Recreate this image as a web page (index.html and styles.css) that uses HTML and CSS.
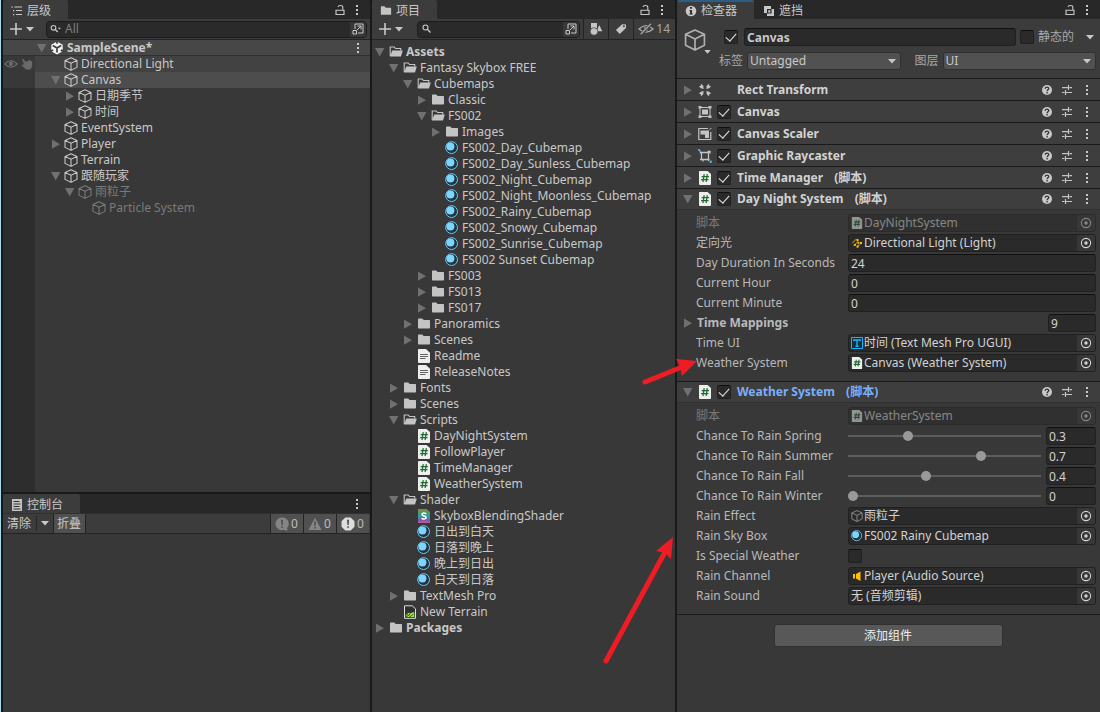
FILE: index.html
```html
<!DOCTYPE html>
<html lang="zh-CN">
<head>
<meta charset="utf-8">
<meta name="viewport" content="width=device-width, initial-scale=1">
<title>SampleScene</title>
<link rel="stylesheet" href="styles.css">
</head>
<body>
<svg class="sprite" aria-hidden="true">
  <symbol id="down" viewBox="0 0 14 14"><path d="M2 3h9.400L6.700 11.400z" fill="currentColor"/></symbol>
  <symbol id="right" viewBox="0 0 14 14"><path d="M3 2.600v9.200L11 7.200z" fill="currentColor"/></symbol>
  <symbol id="caret" viewBox="0 0 8 5"><path d="M0 0h8L4 4.600z" fill="currentColor"/></symbol>
  <symbol id="plus" viewBox="0 0 12 12"><path d="M6 0v12M0 6h12" stroke="currentColor" stroke-width="1.600"/></symbol>
  <symbol id="dots" viewBox="0 0 4 12"><path d="M1 1h2v2H1zM1 5h2v2H1zM1 9h2v2H1z" fill="currentColor"/></symbol>
  <symbol id="lock" viewBox="0 0 12 12"><path d="M2 6.300h8v4.200H2zM8.800 6V3.200C8.800.9 4.200.9 4 3" fill="none" stroke="currentColor" stroke-width="1.100"/></symbol>
  <symbol id="cube" viewBox="0 0 14 14"><path d="M7 .7l6 2.700v7L7 13.400l-6-3v-7zM1 3.400l6 2.900 6-2.900M7 6.300v7" fill="none" stroke="currentColor" stroke-width="1.050" stroke-linejoin="round"/></symbol>
  <symbol id="unity" viewBox="0 0 14 14"><path d="M7 .4l5.700 3.300v6.600L7 13.600 1.300 10.300V3.700z" fill="#f2f2f2"/><path d="M7 7v4.600M7 7L2.800 4.600M7 7l4.200-2.400M7 0v2.800M0 10.500l3.200-1.600M14 10.500l-3.200-1.600" stroke="#3c3c3c" stroke-width="1.700"/></symbol>
  <symbol id="folder" viewBox="0 0 14 14"><path d="M1 2.200q0-.7.7-.7h3.500l1.500 1.600h5.600q.7 0 .7.7v7q0 .7-.7.7H1.700q-.7 0-.7-.7z" fill="#c4c4c4"/></symbol>
  <symbol id="open" viewBox="0 0 14 14"><path d="M1.200 11V2h4l1.300 1.500h5.200v2" fill="none" stroke="#c4c4c4" stroke-width="1.100"/><path d="M3.300 5.500h10.500L12 11.500H.9z" fill="#c4c4c4"/></symbol>
  <symbol id="ball" viewBox="0 0 14 14"><circle cx="6.600" cy="6.600" r="5.900" fill="#24343e" stroke="#76c5ec" stroke-width="1"/><circle cx="5.400" cy="5.400" r="4" fill="#7bd5ff"/></symbol>
  <symbol id="doc" viewBox="0 0 14 14"><path d="M1.500 0H9l4 3.700V13q0 1-1 1H2q-1 0-1-1V.5q0-.5.5-.5z" fill="#eee"/><path d="M3 5.500h8M3 7.500h8M3 9.500h5.500" stroke="#555" stroke-width=".9"/></symbol>
  <symbol id="script" viewBox="0 0 14 14"><path d="M1.500 0H9.500l3.500 3V13q0 1-1 1H2q-1 0-1-1V.5q0-.5.5-.5z" fill="#eee"/><path d="M6.200 3.200L5 11M9.300 3.200L8.100 11M3.600 5.700h7.400M3.100 8.600h7.400" stroke="#1d6b2d" stroke-width="1.250" fill="none"/></symbol>
  <symbol id="shader" viewBox="0 0 14 14"><defs><linearGradient id="rainbow" x2="0" y2="1"><stop stop-color="#9a7d3a"/><stop offset=".25" stop-color="#4d9a62"/><stop offset=".55" stop-color="#3a95a8"/><stop offset=".8" stop-color="#7a5ca8"/><stop offset="1" stop-color="#d0559a"/></linearGradient></defs><path d="M1 0h8.500l3.500 3v11H1z" fill="url(#rainbow)"/><path d="M9.300 5Q7.500 3.700 5.800 4.300C4.500 5 4.900 6.500 7 7s2.700 1.800 1.500 2.700q-1.800.9-3.900-.4" fill="none" stroke="#fff" stroke-width="1.500"/></symbol>
  <symbol id="terrain" viewBox="0 0 14 14"><path d="M1.500.8h7.700l3.300 3v9.500h-11z" fill="#303030" stroke="#ddd" stroke-width="1"/><path d="M2.800 9.500l3-1.800 2 .3 3.500-1v5H2.800z" fill="#9eea38"/><path d="M3 12l4-2.500M6 12.500l4.500-3.500M3 10l2-.5M8 7l-2 3" stroke="#303030" stroke-width=".8"/></symbol>
  <symbol id="list" viewBox="0 0 12 12"><path d="M3.500 2h7.500M5 5.500h6M5 9.500h6" stroke="currentColor" stroke-width="1.100"/><path d="M.5 1.500h1.300v1.300H.5zM2 5h1.300v1.200H2zM2 9h1.300v1.200H2z" fill="currentColor"/></symbol>
  <symbol id="console" viewBox="0 0 12 12"><path d="M1 0h10v12H1z" fill="#c4c4c4"/><path d="M2.500 2.500h6M2.500 5h7M2.500 7.500h6M2.500 10h7" stroke="#333" stroke-width="1"/></symbol>
  <symbol id="info" viewBox="0 0 12 12"><circle cx="6" cy="6" r="5.300" fill="#c8c8c8"/><path d="M5 2h2v1.700H5zM4.500 5H7v3.500h.8v1H4.300v-1H5V6h-.5z" fill="#333"/></symbol>
  <symbol id="occlude" viewBox="0 0 12 12"><path d="M1 1h7v3H4v4H1z" fill="#c8c8c8"/><path d="M4 4h7v7H4z" fill="#c8c8c8"/><path d="M4.600 4.600h3.400v3.400H4.600z" fill="none" stroke="#282828" stroke-width="1.200"/></symbol>
  <symbol id="glass" viewBox="0 0 12 12"><circle cx="4.500" cy="4.500" r="2.500" fill="none" stroke="currentColor" stroke-width="1.100"/><path d="M6.300 6.300L9.500 9.500" stroke="currentColor" stroke-width="1.300"/></symbol>
  <symbol id="glassdown" viewBox="0 0 12 12"><circle cx="3.500" cy="4.800" r="2.300" fill="none" stroke="currentColor" stroke-width="1.100"/><path d="M5.300 6.500L7.800 9" stroke="currentColor" stroke-width="1.300"/><path d="M7.800 4.700H11L9.400 6.500z" fill="currentColor"/></symbol>
  <symbol id="popout" viewBox="0 0 12 12"><path d="M3 6V1h8v9H6M1 7.500h3.500V11H1zM5 7l4-4M5.500 3H9v3.500" fill="none" stroke="currentColor" stroke-width="1"/></symbol>
  <symbol id="eye" viewBox="0 0 14 12"><path d="M.8 6Q7-.8 13.200 6 7 12.300.8 6z" fill="none" stroke="currentColor" stroke-width="1.300"/><circle cx="7" cy="5.800" r="2.300" fill="currentColor"/></symbol>
  <symbol id="hand" viewBox="0 0 12 12"><path d="M.8.8L2 .7l2.600 3L7.200 3l1.100-1.500L9.800 3l1.400.3V8l-1.500 3.500H5L.7 7.600l.2-1.200 2.200.2z" fill="currentColor"/></symbol>
  <symbol id="shapes" viewBox="0 0 14 14"><path d="M2 1h6v5H2zM10.300 3L13.300 9.300H7.500z" fill="#c4c4c4"/><circle cx="5" cy="9.500" r="3.800" fill="#c4c4c4" stroke="#3c3c3c" stroke-width=".7"/></symbol>
  <symbol id="tag" viewBox="0 0 12 12"><path d="M7.200 1.200l3.800.2v3.700L4.700 11 .9 7z" fill="#c4c4c4"/><circle cx="8.900" cy="3.300" r="1" fill="#3c3c3c"/></symbol>
  <symbol id="hidden" viewBox="0 0 16 12"><path d="M1 6Q8-.8 15 6 8 12.300 1 6z" fill="none" stroke="currentColor" stroke-width="1.300"/><circle cx="8" cy="6" r="2.200" fill="currentColor"/><path d="M3 11.500L13.500.5" stroke="#3c3c3c" stroke-width="3"/><path d="M2.700 11.300L13 .7" stroke="currentColor" stroke-width="1.300"/></symbol>
  <symbol id="rect" viewBox="0 0 14 14"><path d="M3 .8l2.300 2L5.600 6 2.800 5.300.8 3.200l1.900-.3zM11 .8l-2.300 2L8.400 6l2.800-.7 2-2.100-1.900-.3zM3 13.200l2.300-2L5.600 8l-2.800.7-2 2.100 1.900.3zM11 13.200l-2.300-2L8.400 8l2.800.7 2 2.100-1.900.3z" fill="#c4c4c4"/></symbol>
  <symbol id="canvas" viewBox="0 0 14 14"><path d="M2 2.500h10v9H2z" fill="none" stroke="#c4c4c4"/><path d="M4 4.500h6v5H4zM.5 1h3v2.500h-3zM10.500 1h3v2.500h-3zM.5 10.500h3V13h-3zM10.500 10.500h3V13h-3z" fill="#c4c4c4"/></symbol>
  <symbol id="scaler" viewBox="0 0 14 14"><path d="M10 1.500H.8v11h12V5" fill="none" stroke="#c4c4c4" stroke-width="1.200"/><path d="M2.500 3.500H11V11H7V7.500H2.500z" fill="#c4c4c4"/><path d="M11.500 2.800L13.300 1" fill="none" stroke="#c4c4c4"/></symbol>
  <symbol id="raycast" viewBox="0 0 14 14"><path d="M3.500 3.500h7v7h-7zM2.500 2.500v2M2 3.500h2M9.500 2.500h2.500v2M2 10.500h3v2M9.500 10.500h2M10.500 9v3" fill="none" stroke="#c4c4c4" stroke-width="1.300"/><path d="M0 0l2.500 2.500" stroke="#5ab8ee" stroke-width="1.600"/><circle cx="12.700" cy="12.700" r="1.200" fill="#5ab8ee"/></symbol>
  <symbol id="help" viewBox="0 0 12 12"><circle cx="6" cy="6" r="5" fill="#c8c8c8"/><path d="M4.200 4.700C4.200 2.600 7.800 2.700 7.700 4.600 7.600 5.900 6.100 5.700 6.100 7.200M6.100 8.100v1.400" fill="none" stroke="#333" stroke-width="1.300"/></symbol>
  <symbol id="presets" viewBox="0 0 12 12"><path d="M1 3.700h6M8.500 3.700H11M7.500 1v5M1 8.500h2.500M5 8.500h6M4.500 6v5" stroke="#c4c4c4" stroke-width="1.200"/></symbol>
  <symbol id="target" viewBox="0 0 12 12"><circle cx="6" cy="6" r="4.600" fill="none" stroke="currentColor" stroke-width="1.100"/><circle cx="6" cy="6" r="1.700" fill="currentColor"/></symbol>
  <symbol id="light" viewBox="0 0 12 12"><path d="M1.300 6L5.500 1.800M3.500 8L7.500 4M5.500 10.500l4-4" stroke="#8d7440" stroke-width="1.200"/><path d="M5.500 2h2v2h-2zM9 5h2v2H9zM2.800 7h2v2h-2zM5.700 8.500h2v2h-2zM6.500 5h1.700v1.700H6.500z" fill="#ffc107"/></symbol>
  <symbol id="tmp" viewBox="0 0 12 12"><path d="M.5.5h11v11H.5z" fill="#10303f" stroke="#22b0f5" stroke-width="1"/><path d="M2.800 4.300V3h6.400v1.300M6 3v6M4.500 9.300h3" fill="none" stroke="#22b0f5" stroke-width="1.400"/></symbol>
  <symbol id="audio" viewBox="0 0 12 12"><path d="M2 4h2v4.500H2z" fill="#ffc107"/><path d="M5 4L9.500 1.500v9.500L5 8.500z" fill="#ffc107"/></symbol>
  <symbol id="bubble" viewBox="0 0 14 14"><path d="M7 .5a6.300 6.300 0 1 0 2 12.200L12.500 14l-.4-3A6.300 6.300 0 0 0 7 .5z" fill="#858585"/><path d="M6.200 2.800h1.700L7.600 8H6.500zM6.300 9.300h1.500v1.500H6.300z" fill="#444"/></symbol>
  <symbol id="warn" viewBox="0 0 14 14"><path d="M7 .8L13.500 13H.5z" fill="#858585"/><path d="M6.300 4.500h1.500L7.500 9h-1zM6.300 10h1.500v1.500H6.300z" fill="#444"/></symbol>
  <symbol id="error" viewBox="0 0 14 14"><path d="M4.300.5h5.400l3.800 3.800v5.400l-3.800 3.800H4.300L.5 9.700V4.300z" fill="#ddd"/><path d="M6.200 2.800h1.700L7.600 8H6.500zM6.300 9.300h1.500v1.500H6.300z" fill="#333"/></symbol>
</svg>

<main class="editor">
  <div class="column">
    <section class="panel hierarchy">
      <header class="tabs">
        <button class="tab active"><svg class="i12"><use href="#list"/></svg>层级</button>
        <span class="tools"><button aria-label="锁定"><svg class="i12"><use href="#lock"/></svg></button><button aria-label="菜单"><svg class="idots"><use href="#dots"/></svg></button></span>
      </header>
      <div class="toolbar">
        <button class="add" aria-label="创建"><svg class="i12"><use href="#plus"/></svg><svg class="icaret"><use href="#caret"/></svg></button>
        <label class="search"><svg class="i12"><use href="#glassdown"/></svg><input type="text" placeholder="All" aria-label="搜索层级"><button aria-label="打开搜索"><svg class="i12"><use href="#popout"/></svg></button></label>
      </div>
      <ul class="tree scene-tree">
        <li class="row scene"><span class="vis"></span><button class="fold" aria-label="折叠"><svg><use href="#down"/></svg></button><svg class="icon"><use href="#unity"/></svg><span>SampleScene*</span><button class="end" aria-label="场景菜单"><svg class="idots"><use href="#dots"/></svg></button></li>
        <li class="row d1 hover"><span class="vis"><svg class="ieye"><use href="#eye"/></svg><svg class="i12"><use href="#hand"/></svg></span><i class="fold"></i><svg class="icon"><use href="#cube"/></svg><span>Directional Light</span></li>
        <li class="row d1 selected"><span class="vis"></span><button class="fold" aria-label="折叠"><svg><use href="#down"/></svg></button><svg class="icon"><use href="#cube"/></svg><span>Canvas</span></li>
        <li class="row d2"><span class="vis"></span><button class="fold" aria-label="展开"><svg><use href="#right"/></svg></button><svg class="icon"><use href="#cube"/></svg><span>日期季节</span></li>
        <li class="row d2"><span class="vis"></span><button class="fold" aria-label="展开"><svg><use href="#right"/></svg></button><svg class="icon"><use href="#cube"/></svg><span>时间</span></li>
        <li class="row d1"><span class="vis"></span><i class="fold"></i><svg class="icon"><use href="#cube"/></svg><span>EventSystem</span></li>
        <li class="row d1"><span class="vis"></span><button class="fold" aria-label="展开"><svg><use href="#right"/></svg></button><svg class="icon"><use href="#cube"/></svg><span>Player</span></li>
        <li class="row d1"><span class="vis"></span><i class="fold"></i><svg class="icon"><use href="#cube"/></svg><span>Terrain</span></li>
        <li class="row d1"><span class="vis"></span><button class="fold" aria-label="折叠"><svg><use href="#down"/></svg></button><svg class="icon"><use href="#cube"/></svg><span>跟随玩家</span></li>
        <li class="row d2 off"><span class="vis"></span><button class="fold" aria-label="折叠"><svg><use href="#down"/></svg></button><svg class="icon"><use href="#cube"/></svg><span>雨粒子</span></li>
        <li class="row d3 off"><span class="vis"></span><i class="fold"></i><svg class="icon"><use href="#cube"/></svg><span>Particle System</span></li>
      </ul>
    </section>
    <section class="panel console">
      <header class="tabs">
        <button class="tab active"><svg class="i12"><use href="#console"/></svg>控制台</button>
        <span class="tools"><button aria-label="菜单"><svg class="idots"><use href="#dots"/></svg></button></span>
      </header>
      <div class="console-bar">
        <button class="clear">清除</button>
        <button class="clear-menu" aria-label="清除选项"><svg class="icaret"><use href="#caret"/></svg></button>
        <button class="toggle">折叠</button>
        <span class="counts">
          <button class="toggle"><svg class="icon"><use href="#bubble"/></svg>0</button>
          <button class="toggle"><svg class="icon"><use href="#warn"/></svg>0</button>
          <button class="toggle"><svg class="icon"><use href="#error"/></svg>0</button>
        </span>
      </div>
    </section>
  </div>

  <section class="panel project">
    <header class="tabs">
      <button class="tab active"><svg class="i12"><use href="#folder"/></svg>项目</button>
      <span class="tools"><button aria-label="锁定"><svg class="i12"><use href="#lock"/></svg></button><button aria-label="菜单"><svg class="idots"><use href="#dots"/></svg></button></span>
    </header>
    <div class="toolbar">
      <button class="add" aria-label="创建"><svg class="i12"><use href="#plus"/></svg><svg class="icaret"><use href="#caret"/></svg></button>
      <label class="search"><svg class="i12"><use href="#glass"/></svg><input type="text" aria-label="搜索项目"><button aria-label="打开搜索"><svg class="i12"><use href="#popout"/></svg></button></label>
      <span class="filters">
        <button aria-label="按类型搜索"><svg class="icon"><use href="#shapes"/></svg></button>
        <button aria-label="按标签搜索"><svg class="i12"><use href="#tag"/></svg></button>
        <button><svg class="ihidden"><use href="#hidden"/></svg>14</button>
      </span>
    </div>
    <ul class="tree assets">
      <li class="row strong"><button class="fold" aria-label="折叠"><svg><use href="#down"/></svg></button><svg class="icon"><use href="#open"/></svg><span>Assets</span></li>
      <li class="row d1"><button class="fold" aria-label="折叠"><svg><use href="#down"/></svg></button><svg class="icon"><use href="#open"/></svg><span>Fantasy Skybox FREE</span></li>
      <li class="row d2"><button class="fold" aria-label="折叠"><svg><use href="#down"/></svg></button><svg class="icon"><use href="#open"/></svg><span>Cubemaps</span></li>
      <li class="row d3"><button class="fold" aria-label="展开"><svg><use href="#right"/></svg></button><svg class="icon"><use href="#folder"/></svg><span>Classic</span></li>
      <li class="row d3"><button class="fold" aria-label="折叠"><svg><use href="#down"/></svg></button><svg class="icon"><use href="#open"/></svg><span>FS002</span></li>
      <li class="row d4"><button class="fold" aria-label="展开"><svg><use href="#right"/></svg></button><svg class="icon"><use href="#folder"/></svg><span>Images</span></li>
      <li class="row d4"><i class="fold"></i><svg class="icon"><use href="#ball"/></svg><span>FS002_Day_Cubemap</span></li>
      <li class="row d4"><i class="fold"></i><svg class="icon"><use href="#ball"/></svg><span>FS002_Day_Sunless_Cubemap</span></li>
      <li class="row d4"><i class="fold"></i><svg class="icon"><use href="#ball"/></svg><span>FS002_Night_Cubemap</span></li>
      <li class="row d4"><i class="fold"></i><svg class="icon"><use href="#ball"/></svg><span>FS002_Night_Moonless_Cubemap</span></li>
      <li class="row d4"><i class="fold"></i><svg class="icon"><use href="#ball"/></svg><span>FS002_Rainy_Cubemap</span></li>
      <li class="row d4"><i class="fold"></i><svg class="icon"><use href="#ball"/></svg><span>FS002_Snowy_Cubemap</span></li>
      <li class="row d4"><i class="fold"></i><svg class="icon"><use href="#ball"/></svg><span>FS002_Sunrise_Cubemap</span></li>
      <li class="row d4"><i class="fold"></i><svg class="icon"><use href="#ball"/></svg><span>FS002 Sunset Cubemap</span></li>
      <li class="row d3"><button class="fold" aria-label="展开"><svg><use href="#right"/></svg></button><svg class="icon"><use href="#folder"/></svg><span>FS003</span></li>
      <li class="row d3"><button class="fold" aria-label="展开"><svg><use href="#right"/></svg></button><svg class="icon"><use href="#folder"/></svg><span>FS013</span></li>
      <li class="row d3"><button class="fold" aria-label="展开"><svg><use href="#right"/></svg></button><svg class="icon"><use href="#folder"/></svg><span>FS017</span></li>
      <li class="row d2"><button class="fold" aria-label="展开"><svg><use href="#right"/></svg></button><svg class="icon"><use href="#folder"/></svg><span>Panoramics</span></li>
      <li class="row d2"><button class="fold" aria-label="展开"><svg><use href="#right"/></svg></button><svg class="icon"><use href="#folder"/></svg><span>Scenes</span></li>
      <li class="row d2"><i class="fold"></i><svg class="icon"><use href="#doc"/></svg><span>Readme</span></li>
      <li class="row d2"><i class="fold"></i><svg class="icon"><use href="#doc"/></svg><span>ReleaseNotes</span></li>
      <li class="row d1"><button class="fold" aria-label="展开"><svg><use href="#right"/></svg></button><svg class="icon"><use href="#folder"/></svg><span>Fonts</span></li>
      <li class="row d1"><button class="fold" aria-label="展开"><svg><use href="#right"/></svg></button><svg class="icon"><use href="#folder"/></svg><span>Scenes</span></li>
      <li class="row d1"><button class="fold" aria-label="折叠"><svg><use href="#down"/></svg></button><svg class="icon"><use href="#open"/></svg><span>Scripts</span></li>
      <li class="row d2"><i class="fold"></i><svg class="icon"><use href="#script"/></svg><span>DayNightSystem</span></li>
      <li class="row d2"><i class="fold"></i><svg class="icon"><use href="#script"/></svg><span>FollowPlayer</span></li>
      <li class="row d2"><i class="fold"></i><svg class="icon"><use href="#script"/></svg><span>TimeManager</span></li>
      <li class="row d2"><i class="fold"></i><svg class="icon"><use href="#script"/></svg><span>WeatherSystem</span></li>
      <li class="row d1"><button class="fold" aria-label="折叠"><svg><use href="#down"/></svg></button><svg class="icon"><use href="#open"/></svg><span>Shader</span></li>
      <li class="row d2"><i class="fold"></i><svg class="icon"><use href="#shader"/></svg><span>SkyboxBlendingShader</span></li>
      <li class="row d2"><i class="fold"></i><svg class="icon"><use href="#ball"/></svg><span>日出到白天</span></li>
      <li class="row d2"><i class="fold"></i><svg class="icon"><use href="#ball"/></svg><span>日落到晚上</span></li>
      <li class="row d2"><i class="fold"></i><svg class="icon"><use href="#ball"/></svg><span>晚上到日出</span></li>
      <li class="row d2"><i class="fold"></i><svg class="icon"><use href="#ball"/></svg><span>白天到日落</span></li>
      <li class="row d1"><button class="fold" aria-label="展开"><svg><use href="#right"/></svg></button><svg class="icon"><use href="#folder"/></svg><span>TextMesh Pro</span></li>
      <li class="row d1"><i class="fold"></i><svg class="icon"><use href="#terrain"/></svg><span>New Terrain</span></li>
      <li class="row strong"><button class="fold" aria-label="展开"><svg><use href="#right"/></svg></button><svg class="icon"><use href="#folder"/></svg><span>Packages</span></li>
    </ul>
  </section>

  <section class="panel inspector">
    <header class="tabs">
      <button class="tab active focused"><svg class="i12"><use href="#info"/></svg>检查器</button>
      <button class="tab"><svg class="i12"><use href="#occlude"/></svg>遮挡</button>
      <span class="tools"><button aria-label="锁定"><svg class="i12"><use href="#lock"/></svg></button><button aria-label="菜单"><svg class="idots"><use href="#dots"/></svg></button></span>
    </header>
    <div class="object-head">
      <button class="object-icon" aria-label="选择图标"><svg class="big"><use href="#cube"/></svg><svg class="icaret"><use href="#caret"/></svg></button>
      <div class="object-lines">
        <div class="name-line">
          <input type="checkbox" checked aria-label="启用">
          <input class="field name" type="text" value="Canvas" aria-label="名称">
          <input type="checkbox" id="static"><label for="static">静态的</label>
          <button class="static-menu" aria-label="静态选项"><svg class="icaret"><use href="#caret"/></svg></button>
        </div>
        <div class="tag-line">
          <label for="tagsel">标签</label><span class="drop"><select id="tagsel"><option>Untagged</option></select><svg class="icaret"><use href="#caret"/></svg></span>
          <label class="layer" for="layersel">图层</label><span class="drop"><select id="layersel"><option>UI</option></select><svg class="icaret"><use href="#caret"/></svg></span>
        </div>
      </div>
    </div>

    <article class="component"><header class="comp-head"><button class="fold" aria-label="展开"><svg><use href="#right"/></svg></button><svg class="icon"><use href="#rect"/></svg><i class="nobox"></i><h2>Rect Transform</h2><button aria-label="帮助"><svg class="i12"><use href="#help"/></svg></button><button aria-label="预设"><svg class="i12"><use href="#presets"/></svg></button><button aria-label="菜单"><svg class="idots"><use href="#dots"/></svg></button></header></article>
    <article class="component"><header class="comp-head"><button class="fold" aria-label="展开"><svg><use href="#right"/></svg></button><svg class="icon"><use href="#canvas"/></svg><input type="checkbox" checked aria-label="启用 Canvas"><h2>Canvas</h2><button aria-label="帮助"><svg class="i12"><use href="#help"/></svg></button><button aria-label="预设"><svg class="i12"><use href="#presets"/></svg></button><button aria-label="菜单"><svg class="idots"><use href="#dots"/></svg></button></header></article>
    <article class="component"><header class="comp-head"><button class="fold" aria-label="展开"><svg><use href="#right"/></svg></button><svg class="icon"><use href="#scaler"/></svg><input type="checkbox" checked aria-label="启用 Canvas Scaler"><h2>Canvas Scaler</h2><button aria-label="帮助"><svg class="i12"><use href="#help"/></svg></button><button aria-label="预设"><svg class="i12"><use href="#presets"/></svg></button><button aria-label="菜单"><svg class="idots"><use href="#dots"/></svg></button></header></article>
    <article class="component"><header class="comp-head"><button class="fold" aria-label="展开"><svg><use href="#right"/></svg></button><svg class="icon"><use href="#raycast"/></svg><input type="checkbox" checked aria-label="启用 Graphic Raycaster"><h2>Graphic Raycaster</h2><button aria-label="帮助"><svg class="i12"><use href="#help"/></svg></button><button aria-label="预设"><svg class="i12"><use href="#presets"/></svg></button><button aria-label="菜单"><svg class="idots"><use href="#dots"/></svg></button></header></article>
    <article class="component"><header class="comp-head"><button class="fold" aria-label="展开"><svg><use href="#right"/></svg></button><svg class="icon"><use href="#script"/></svg><input type="checkbox" checked aria-label="启用 Time Manager"><h2>Time Manager <span class="kind">(脚本)</span></h2><button aria-label="帮助"><svg class="i12"><use href="#help"/></svg></button><button aria-label="预设"><svg class="i12"><use href="#presets"/></svg></button><button aria-label="菜单"><svg class="idots"><use href="#dots"/></svg></button></header></article>

    <article class="component">
      <header class="comp-head opened"><button class="fold" aria-label="折叠"><svg><use href="#down"/></svg></button><svg class="icon"><use href="#script"/></svg><input type="checkbox" checked aria-label="启用 Day Night System"><h2>Day Night System <span class="kind">(脚本)</span></h2><button aria-label="帮助"><svg class="i12"><use href="#help"/></svg></button><button aria-label="预设"><svg class="i12"><use href="#presets"/></svg></button><button aria-label="菜单"><svg class="idots"><use href="#dots"/></svg></button></header>
      <div class="props">
        <div class="prop disabled"><span>脚本</span><div class="field object"><svg class="i12"><use href="#script"/></svg><span>DayNightSystem</span><button disabled aria-label="选择"><svg class="i12"><use href="#target"/></svg></button></div></div>
        <div class="prop"><span>定向光</span><div class="field object"><svg class="i12"><use href="#light"/></svg><span>Directional Light (Light)</span><button aria-label="选择"><svg class="i12"><use href="#target"/></svg></button></div></div>
        <div class="prop"><label for="dur">Day Duration In Seconds</label><input class="field" id="dur" type="text" value="24"></div>
        <div class="prop"><label for="hour">Current Hour</label><input class="field" id="hour" type="text" value="0"></div>
        <div class="prop"><label for="minute">Current Minute</label><input class="field" id="minute" type="text" value="0"></div>
        <div class="prop array"><button class="fold" aria-label="展开"><svg><use href="#right"/></svg></button><label for="maps">Time Mappings</label><input class="field" id="maps" type="text" value="9"></div>
        <div class="prop"><span>Time UI</span><div class="field object"><svg class="i12"><use href="#tmp"/></svg><span>时间 (Text Mesh Pro UGUI)</span><button aria-label="选择"><svg class="i12"><use href="#target"/></svg></button></div></div>
        <div class="prop"><span>Weather System</span><div class="field object"><svg class="i12"><use href="#script"/></svg><span>Canvas (Weather System)</span><button aria-label="选择"><svg class="i12"><use href="#target"/></svg></button></div></div>
      </div>
    </article>

    <article class="component">
      <header class="comp-head opened"><button class="fold" aria-label="折叠"><svg><use href="#down"/></svg></button><svg class="icon"><use href="#script"/></svg><input type="checkbox" checked aria-label="启用 Weather System"><h2 class="fresh">Weather System <span class="kind">(脚本)</span></h2><button aria-label="帮助"><svg class="i12"><use href="#help"/></svg></button><button aria-label="预设"><svg class="i12"><use href="#presets"/></svg></button><button aria-label="菜单"><svg class="idots"><use href="#dots"/></svg></button></header>
      <div class="props">
        <div class="prop disabled"><span>脚本</span><div class="field object"><svg class="i12"><use href="#script"/></svg><span>WeatherSystem</span><button disabled aria-label="选择"><svg class="i12"><use href="#target"/></svg></button></div></div>
        <div class="prop"><label for="spring">Chance To Rain Spring</label><div class="slider"><input id="spring" type="range" min="0" max="1" step="0.1" value="0.3"><input class="field" type="text" value="0.3" aria-label="Spring"></div></div>
        <div class="prop"><label for="summer">Chance To Rain Summer</label><div class="slider"><input id="summer" type="range" min="0" max="1" step="0.1" value="0.7"><input class="field" type="text" value="0.7" aria-label="Summer"></div></div>
        <div class="prop"><label for="fall">Chance To Rain Fall</label><div class="slider"><input id="fall" type="range" min="0" max="1" step="0.1" value="0.4"><input class="field" type="text" value="0.4" aria-label="Fall"></div></div>
        <div class="prop"><label for="winter">Chance To Rain Winter</label><div class="slider"><input id="winter" type="range" min="0" max="1" step="0.1" value="0"><input class="field" type="text" value="0" aria-label="Winter"></div></div>
        <div class="prop"><span>Rain Effect</span><div class="field object"><svg class="i12 faint"><use href="#cube"/></svg><span>雨粒子</span><button aria-label="选择"><svg class="i12"><use href="#target"/></svg></button></div></div>
        <div class="prop"><span>Rain Sky Box</span><div class="field object"><svg class="i12"><use href="#ball"/></svg><span>FS002 Rainy Cubemap</span><button aria-label="选择"><svg class="i12"><use href="#target"/></svg></button></div></div>
        <div class="prop"><label for="special">Is Special Weather</label><input id="special" type="checkbox"></div>
        <div class="prop"><span>Rain Channel</span><div class="field object"><svg class="i12"><use href="#audio"/></svg><span>Player (Audio Source)</span><button aria-label="选择"><svg class="i12"><use href="#target"/></svg></button></div></div>
        <div class="prop"><span>Rain Sound</span><div class="field object"><span>无 (音频剪辑)</span><button aria-label="选择"><svg class="i12"><use href="#target"/></svg></button></div></div>
      </div>
    </article>
    <footer class="add-bar"><button class="add-component">添加组件</button></footer>
  </section>
</main>

<svg class="marks" viewBox="0 0 1100 712" aria-hidden="true">
  <g fill="#ee1c24" stroke="#ee1c24" stroke-linecap="round">
    <path d="M645 382L682 367" stroke-width="5"/><path d="M697 361L676 359l4 7 2 10z" stroke="none"/>
    <path d="M606 661L665 552" stroke-width="5"/><path d="M673 537L656 551l9 2 6 6z" stroke="none"/>
  </g>
</svg>
</body>
</html>
```

FILE: styles.css
```css
* { box-sizing: border-box; }

body {
  margin: 0;
  min-height: 100vh;
  background: #191919;
  color: #c8c8c8;
  font: 12px/16px "Noto Sans", "Noto Sans CJK SC", sans-serif;
}

ul, h2 { margin: 0; padding: 0; font-size: inherit; }
svg { display: block; flex: none; }

button, input, select {
  margin: 0;
  padding: 0;
  border: 0;
  background: none;
  color: inherit;
  font: inherit;
  outline: 0;
}

button { display: flex; align-items: center; flex: none; }

.sprite { position: absolute; width: 0; height: 0; }
.i12 { width: 12px; height: 12px; }
.icon { width: 14px; height: 14px; }
.idots { width: 4px; height: 12px; }
.icaret { width: 8px; height: 5px; }
.ieye { width: 14px; height: 12px; }
.ihidden { width: 16px; height: 12px; }

/* Window layout */
.editor {
  display: grid;
  grid-template-columns: 367fr 303fr 423fr;
  gap: 2px;
  min-height: 100vh;
  padding-left: 3px;
  background: linear-gradient(90deg, #a5dcf0 1px, #191919 1px);
}

.column { display: grid; grid-template-rows: 492fr 218fr; gap: 2px; min-width: 0; }
.panel { min-width: 0; background: #383838; }

.tabs { display: flex; height: 19px; background: #282828; }
.tab { gap: 4px; height: 19px; padding: 2px 17px 0 8px; }
.tab.active { background: #3c3c3c; border-radius: 2px 2px 0 0; }
.tab.focused { border-top: 2px solid #2c5d87; padding-top: 0; }
.tab + .tab { padding-left: 9px; }
.tools { display: flex; gap: 9px; margin-left: auto; padding-right: 11px; }

.toolbar {
  display: flex;
  align-items: center;
  height: 21px;
  padding: 0 3px 0 7px;
  background: #3c3c3c;
  border-bottom: 1px solid #232323;
}

.add { gap: 4px; width: 36px; }

.search {
  display: flex;
  align-items: center;
  flex: 1;
  min-width: 0;
  height: 17px;
  padding-left: 3px;
  background: #2a2a2a;
  border: 1px solid #1c1c1c;
  border-radius: 4px;
  overflow: hidden;
}

.search input { flex: 1; min-width: 0; padding-left: 3px; }
.search input::placeholder { color: #7d7d7d; }
.search button { width: 16px; height: 16px; padding-left: 2px; background: #383838; }

/* Trees */
.tree { list-style: none; }
.row { display: flex; align-items: center; height: 16px; white-space: nowrap; }
.fold { display: block; flex: none; width: 14px; height: 14px; color: #707070; }
.fold svg { width: 14px; height: 14px; }

.scene-tree { min-height: 452px; background: linear-gradient(90deg, #2d2d2d 32px, #383838 32px); }
.scene-tree .icon { margin: 0 3px 0 1px; }
.scene-tree .d1 .vis { margin-right: 14px; }
.scene-tree .d2 .vis { margin-right: 28px; }
.scene-tree .d3 .vis { margin-right: 42px; }
.vis { display: flex; align-items: center; gap: 3px; flex: none; width: 32px; height: 16px; padding-left: 1px; color: #696969; }
.scene { background: #474747; border-bottom: 1px solid #303030; font-weight: 700; }
.scene .end { margin-left: auto; padding-right: 10px; }
.hover { background: #424242; }
.selected { background: #4d4d4d; }
.hover .vis, .selected .vis { background: #383838; }
.off { color: #7a7a7a; }

.assets { padding: 4px 0 4px 1px; }
.assets .icon { margin: 0 3px 0 2px; }
.assets .d1 { padding-left: 14px; }
.assets .d2 { padding-left: 28px; }
.assets .d3 { padding-left: 42px; }
.assets .d4 { padding-left: 56px; }
.strong { font-weight: 700; }

.project .toolbar { padding-right: 0; }
.project .add { width: 38px; }
.filters { display: flex; align-self: stretch; margin-left: 3px; }
.filters button { gap: 2px; padding: 0 5px; border-left: 1px solid #232323; }
.filters button + button { padding: 0 6px; }
.filters button:last-child { padding: 0 5px 0 4px; color: #a8a8a8; }

/* Console */
.console-bar { display: flex; height: 21px; background: #3c3c3c; border-bottom: 1px solid #232323; border-top: 1px solid #303030; }
.clear { padding: 0 5px 0 4px; }
.clear-menu { margin: 2px 0; padding: 0 4px; border-left: 1px solid #282828; }
.toggle { gap: 2px; padding: 0 4px; background: #505050; border: solid #232323; border-width: 0 1px; }
.console-bar > .toggle { padding: 0 4px 0 3px; }
.counts { display: flex; margin: 0 1px 0 auto; }
.counts .toggle { border-right: 0; color: #bdbdbd; width: 33px; }

/* Fields */
.field {
  width: 100%;
  min-width: 0;
  height: 18px;
  padding: 0 2px;
  background: #2a2a2a;
  border: 1px solid #202020;
  border-top-color: #101010;
  border-radius: 3px;
}

.object { display: flex; align-items: center; gap: 1px; padding-right: 0; white-space: nowrap; overflow: hidden; border-top-color: #202020; }
.object > button { justify-content: center; width: 18px; height: 16px; margin-left: auto; background: #373737; }
.faint { color: #909090; }

input[type="checkbox"] {
  appearance: none;
  display: grid;
  place-items: center;
  flex: none;
  width: 14px;
  height: 14px;
  background: #2a2a2a;
  border: 1px solid #202020;
  border-top-color: #101010;
  border-radius: 2px;
}

input[type="checkbox"]:checked::before {
  content: "";
  width: 9px;
  height: 5px;
  margin-bottom: 2px;
  border: solid #e6e6e6;
  border-width: 0 0 1px 1px;
  transform: rotate(-48deg);
}

/* Inspector */
.object-head { display: flex; padding: 9px 4px 8px 7px; background: #3c3c3c; }
.object-icon { align-items: flex-start; width: 35px; height: 32px; }
.object-icon .big { width: 22px; height: 22px; margin-top: 1px; color: #b0b0b0; }
.object-icon .icaret { width: 7px; height: 4px; margin: 22px 0 0 -2px; }
.object-lines { display: grid; gap: 6px; flex: 1; min-width: 0; }
.name-line, .tag-line { display: flex; align-items: center; height: 18px; }
.name-line { padding-left: 5px; }
.name { flex: 1; margin: 0 4px 0 6px; font-weight: 700; }
.name-line label { margin-left: 4px; white-space: nowrap; color: #a8a8a8; }
.static-menu { margin: 0 2px 0 12px; }
.tag-line label { flex: none; margin-right: 4px; color: #a8a8a8; }
.tag-line .layer { margin-left: 14px; }
.drop { display: grid; align-items: center; flex: 1; min-width: 0; }
.drop > * { grid-area: 1 / 1; }
.drop .icaret { justify-self: end; margin-right: 5px; pointer-events: none; }
.drop select { appearance: none; width: 100%; height: 18px; padding: 0 2px; background: #515151; border: 1px solid #303030; border-radius: 3px; line-height: 16px; }

.component { border-top: 1px solid #1a1a1a; }
.comp-head { display: flex; align-items: center; height: 21px; padding: 0 11px 0 4px; background: #3e3e3e; }
.comp-head.opened { border-bottom: 1px solid #303030; }
.comp-head .icon { margin: 0 5px 0 3px; }
.comp-head h2 { flex: 1; min-width: 0; padding-left: 6px; white-space: nowrap; color: #d2d2d2; }
.comp-head button + button { margin-left: 8px; }
.comp-head button:last-child { margin-left: 12px; }
.comp-head h2.fresh { color: #7baefa; }
.kind { margin-left: 8px; }
.nobox { width: 14px; }

.props { padding: 3px 4px 8px 19px; }
.prop { display: grid; grid-template-columns: 152px 1fr; align-items: center; height: 20px; color: #b8b8b8; white-space: nowrap; }
.prop .field { color: #d2d2d2; }
.prop.disabled > * { opacity: .5; }
.prop.array { grid-template-columns: 14px 1fr 48px; margin-left: -15px; font-weight: 700; }
.array .field { font-weight: 400; }
.array label { padding-left: 2px; }

.slider { display: flex; gap: 5px; align-items: center; min-width: 0; }
.slider .field { width: 50px; flex: none; }
.slider input[type="range"] { appearance: none; flex: 1; min-width: 0; height: 12px; background: linear-gradient(#5e5e5e, #5e5e5e) center / 100% 2px no-repeat; }
.slider input[type="range"]::-webkit-slider-thumb { appearance: none; width: 10px; height: 10px; background: #999; border-radius: 50%; }

.add-bar { display: flex; justify-content: center; padding: 9px 1px 9px 0; border-top: 1px solid #1a1a1a; }
.add-component { justify-content: center; width: 229px; height: 23px; background: #585858; border: 1px solid #303030; border-radius: 3px; color: #eee; }

/* Annotation arrows drawn over the panels */
.marks { position: absolute; top: 0; left: 0; width: 1100px; height: 712px; pointer-events: none; }
```
